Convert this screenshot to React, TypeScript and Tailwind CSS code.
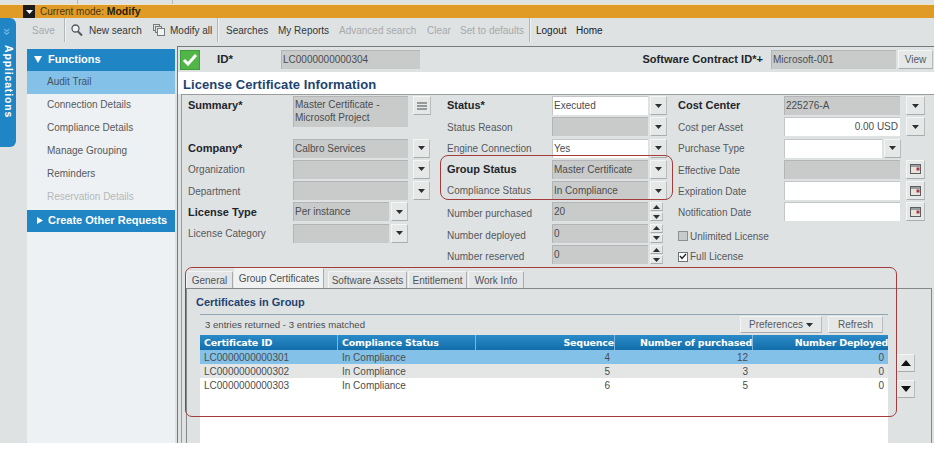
import React from "react";

const Down = ({ className = "" }: { className?: string }) => (
  <svg width="7" height="4" viewBox="0 0 7 4" className={className}><path d="M0 0h7L3.5 4z" fill="#2c2f33" /></svg>
);
const Up = () => (
  <svg width="7" height="4" viewBox="0 0 7 4"><path d="M0 4h7L3.5 0z" fill="#2c2f33" /></svg>
);

const Btn = ({ children, className = "" }: { children?: React.ReactNode; className?: string }) => (
  <div className={"flex items-center justify-center bg-[#e6e8e8] border border-[#f4f5f5] border-r-[#b9bcbd] border-b-[#a9acad] shrink-0 " + className}>{children}</div>
);

const Field = ({ value, white, w, right, tall }: { value?: string; white?: boolean; w: string; right?: boolean; tall?: boolean }) => (
  <div className={`${w} ${tall ? "h-[31px] leading-[13px] pt-[1px]" : "h-[19px] leading-[17px]"} ${white ? "bg-white border-[#c4c7c8]" : "bg-[#c9caca] border-[#b2b4b5]"} ${right ? "text-right pr-[2px]" : ""} border-l border-t px-[1px] text-[10px] text-[#4a4d50] overflow-hidden shrink-0`}>{value}</div>
);

const Label = ({ text, bold, w = "w-[105px]", className = "" }: { text: string; bold?: boolean; w?: string; className?: string }) => (
  <div className={`${w} shrink-0 ${bold ? "font-bold text-[#22262b] text-[11px]" : "text-[#55595d] text-[10px]"} leading-[19px] ${className}`}>{text}</div>
);

const Calendar = () => (
  <svg width="11" height="10" viewBox="0 0 11 10">
    <rect x="0.5" y="0.5" width="10" height="9" fill="#e9e3dc" stroke="#5c5f62" />
    <rect x="1" y="1" width="9" height="2" fill="#9a9da0" />
    <rect x="6.5" y="3.5" width="3" height="3" fill="#a83a48" />
  </svg>
);

const Row = ({ label, bold, value, white, fw = "w-[96px]", btn = true, lcls = "" }: { label: string; bold?: boolean; value?: string; white?: boolean; fw?: string; btn?: boolean; lcls?: string }) => (
  <div className="flex items-start">
    <Label text={label} bold={bold} className={lcls} />
    <Field value={value} white={white} w={fw} />
    {btn && <Btn className="w-[17px] h-[19px] ml-[2px]"><Down /></Btn>}
  </div>
);

const NumRow = ({ label, value }: { label: string; value: string }) => (
  <div className="flex items-start">
    <Label text={label} className="pt-[2px]" />
    <Field value={value} w="w-[96px]" />
    <div className="flex flex-col ml-[2px] gap-[1px]">
      <Btn className="w-[13px] h-[9px]"><Up /></Btn>
      <Btn className="w-[13px] h-[9px]"><Down /></Btn>
    </div>
  </div>
);

const DateRow = ({ label, white }: { label: string; white?: boolean }) => (
  <div className="flex items-start">
    <Label text={label} w="w-[106px]" className="pt-[1px]" />
    <Field white={white} w="w-[116px]" />
    <Btn className="w-[19px] h-[19px] ml-[6px]"><Calendar /></Btn>
  </div>
);

const Tab = ({ text, w, active }: { text: string; w: string; active?: boolean }) => (
  <div className={`${w} ${active ? "h-[20px] bg-[#f0f2f2] text-[#4a4e52] leading-[19px]" : "h-[17px] bg-[#e3e5e6] text-[#505458] leading-[18px]"} border border-b-0 border-[#f3f4f5] border-r-[#a9acae] text-center text-[10px] rounded-t-[2px] shrink-0`}>{text}</div>
);

const Cells = ({ a, b, c, d, e, cls }: { a: string; b: string; c: string; d: string; e: string; cls: string }) => (
  <div className={"flex h-[14px] leading-[15px] text-[10px] text-[#4a4d50] " + cls}>
    <div className="w-[138px] pl-[4px]">{a}</div>
    <div className="w-[138px] pl-[4px]">{b}</div>
    <div className="w-[138px] text-right pr-[4px]">{c}</div>
    <div className="w-[138px] text-right pr-[4px]">{d}</div>
    <div className="w-[136px] text-right pr-[4px]">{e}</div>
  </div>
);

const Sep = ({ ml }: { ml: string }) => <div className={`${ml} w-[2px] h-[24px] self-start bg-[#b4b7b8] border-r border-[#f0f1f1] shrink-0`} />;

const Item = ({ text, active, off }: { text: string; active?: boolean; off?: boolean }) => (
  <div className={`h-[23px] leading-[22px] pl-[20px] text-[10px] ${active ? "bg-[#84c1e8] text-[#46525a]" : off ? "text-[#b5b8ba]" : "text-[#55595d]"}`}>{text}</div>
);

export default function App() {
  return (
    <div className="relative w-[934px] h-[449px] bg-white overflow-hidden font-['Liberation_Sans',Arial,sans-serif]">
      <div className="h-[443px] flex flex-col bg-[#dfe2e3] overflow-hidden">
        <div className="h-[5px] shrink-0 flex border-b border-[#efe3c8]">
          <div className="ml-[77px] w-[1px] bg-[#b4b7b8]" />
          <div className="ml-[94px] w-[1px] bg-[#b4b7b8]" />
        </div>
        <div className="h-[13px] shrink-0 bg-[#df9b25] flex items-center">
          <div className="ml-[23px] w-[12px] h-[13px] bg-[#1b1b1b] flex items-center justify-center">
            <svg width="7" height="4" viewBox="0 0 7 4"><path d="M0 0h7L3.5 4z" fill="#fff" /></svg>
          </div>
          <div className="ml-[5px] text-[10px] leading-[15px] text-[#4a3712]">Current mode: <span className="font-bold text-[#2a1e08] text-[10.5px]">Modify</span></div>
        </div>
        <div className="h-[28px] shrink-0 flex items-center pb-[4px] text-[10px] text-[#33373b] whitespace-nowrap">
          <div className="ml-[32px] text-[#a6a9ab] w-[23px]">Save</div>
          <Sep ml="ml-[9px]" />
          <svg className="ml-[5px] shrink-0" width="12" height="13" viewBox="0 0 12 13" fill="none">
            <circle cx="4.5" cy="4.5" r="3.5" stroke="#55595c" strokeWidth="1.3" fill="#eef2f4" />
            <path d="M7 7.5l4 4" stroke="#55595c" strokeWidth="2" />
          </svg>
          <div className="ml-[6px] w-[52px] shrink-0">New search</div>
          <svg className="ml-[12px] shrink-0" width="12" height="12" viewBox="0 0 12 12" fill="none" stroke="#777b7e">
            <rect x="0.5" y="0.5" width="6" height="6" fill="#dfe2e3" />
            <rect x="2.5" y="2.5" width="6" height="6" fill="#dfe2e3" />
            <rect x="4.5" y="4.5" width="7" height="7" fill="#f2f3f3" />
          </svg>
          <div className="ml-[5px] w-[41px] shrink-0">Modify all</div>
          <Sep ml="ml-[6px]" />
          <div className="ml-[7px] w-[42px] shrink-0">Searches</div>
          <div className="ml-[10px] w-[50px] shrink-0">My Reports</div>
          <div className="ml-[11px] w-[78px] shrink-0 text-[#a6a9ab]">Advanced search</div>
          <div className="ml-[10px] w-[22px] shrink-0 text-[#a6a9ab]">Clear</div>
          <div className="ml-[11px] w-[62px] shrink-0 text-[#a6a9ab]">Set to defaults</div>
          <Sep ml="ml-[7px]" />
          <div className="ml-[5px] w-[31px] shrink-0 text-[#1d2024]">Logout</div>
          <div className="ml-[9px] text-[#1d2024]">Home</div>
        </div>
        <div className="flex-1 flex min-h-0">
          <div className="w-[27px] shrink-0" />
          <div className="w-[148px] mt-[3px] bg-[#eef1f3] shrink-0">
            <div className="h-[22px] bg-[#1f85c4] flex items-center pb-[2px] text-white font-bold text-[11px]">
              <svg className="ml-[7px]" width="8" height="7" viewBox="0 0 8 7"><path d="M0 0h8L4 7z" fill="#fff" /></svg>
              <span className="ml-[6px]">Functions</span>
            </div>
            <Item text="Audit Trail" active />
            <Item text="Connection Details" />
            <Item text="Compliance Details" />
            <Item text="Manage Grouping" />
            <Item text="Reminders" />
            <Item text="Reservation Details" off />
            <div className="h-[22px] mt-[1px] bg-[#1f85c4] flex items-center pb-[2px] text-white font-bold text-[11px]">
              <svg className="ml-[10px]" width="6" height="7" viewBox="0 0 6 7"><path d="M0 0v7l6-3.5z" fill="#fff" /></svg>
              <span className="ml-[5px]">Create Other Requests</span>
            </div>
          </div>
          <div className="flex-1 ml-[2px] flex flex-col border-l border-t border-[#77797a] min-w-0">
            <div className="h-[25px] shrink-0 flex items-center">
              <div className="ml-[2px] w-[20px] h-[20px] bg-[#52b548] border border-[#3c9c35] flex items-center justify-center shrink-0">
                <svg width="16" height="13" viewBox="0 0 16 13" fill="none"><path d="M2 7l4 4 8-9" stroke="#fff" strokeWidth="3" /></svg>
              </div>
              <div className="ml-[17px] w-[64px] font-bold text-[11.5px] text-[#22262b] shrink-0">ID*</div>
              <Field value="LC0000000000304" w="w-[139px]" />
              <div className="ml-auto font-bold text-[11px] tracking-[0.05px] text-[#22262b]">Software Contract ID*+</div>
              <div className="ml-[8px]"><Field value="Microsoft-001" w="w-[125px]" /></div>
              <Btn className="ml-[2px] mr-[1px] w-[35px] h-[19px] text-[10px] text-[#55595d]">View</Btn>
            </div>
            <div className="h-[22px] shrink-0 bg-white pl-[5px] pt-[4px] flex items-center font-bold text-[13px] tracking-[0.08px] text-[#1d4371]">License Certificate Information</div>
            <div className="flex-1 ml-[3px] border-l border-t border-[#9a9d9e] flex flex-col min-h-0">
              <div className="mt-[1px] pl-[6px] grid grid-flow-col grid-cols-[259px_231px_250px] grid-rows-[repeat(8,21.3px)] shrink-0">
                <div className="row-span-2 flex items-start">
                  <Label text="Summary*" bold />
                  <Field value={"Master Certificate - Microsoft Project"} w="w-[115px]" tall />
                  <Btn className="w-[18px] h-[19px] ml-[5px]">
                    <svg width="10" height="8" viewBox="0 0 10 8" fill="none" stroke="#44484b"><path d="M0 1h10M0 4h10M0 7h10" /></svg>
                  </Btn>
                </div>
                <Row label="Company*" bold value="Calbro Services" fw="w-[115px] mr-[3px]" />
                <Row label="Organization" fw="w-[115px] mr-[3px]" />
                <Row label="Department" fw="w-[115px] mr-[3px]" lcls="pt-[1px]" />
                <Row label="License Type" bold value="Per instance" fw="w-[96px]" lcls="pt-[1px]" />
                <Row label="License Category" fw="w-[96px]" />
                <div />

                <Row label="Status*" bold value="Executed" white />
                <Row label="Status Reason" lcls="pt-[1px]" />
                <Row label="Engine Connection" value="Yes" white />
                <Row label="Group Status" bold value="Master Certificate" />
                <Row label="Compliance Status" value="In Compliance" />
                <NumRow label="Number purchased" value="20" />
                <NumRow label="Number deployed" value="0" />
                <NumRow label="Number reserved" value="0" />

                <div className="flex items-start">
                  <Label text="Cost Center" bold w="w-[106px]" />
                  <Field value="225276-A" w="w-[116px]" />
                  <Btn className="w-[19px] h-[19px] ml-[6px]"><Down /></Btn>
                </div>
                <div className="flex items-start">
                  <Label text="Cost per Asset" w="w-[106px]" className="pt-[1px]" />
                  <Field value="0.00 USD" white right w="w-[116px]" />
                  <Btn className="w-[19px] h-[19px] ml-[6px]"><Down /></Btn>
                </div>
                <div className="flex items-start">
                  <Label text="Purchase Type" w="w-[106px]" />
                  <Field white w="w-[98px]" />
                  <Btn className="w-[17px] h-[19px] ml-[2px]"><Down /></Btn>
                </div>
                <DateRow label="Effective Date" />
                <DateRow label="Expiration Date" white />
                <DateRow label="Notification Date" white />
                <div className="flex items-center h-[19px] mt-[3px] text-[10px] text-[#55595d]">
                  <div className="w-[10px] h-[10px] bg-[#c9caca] border border-[#8d9092] mr-[2px]" />
                  Unlimited License
                </div>
                <div className="flex items-center h-[19px] mt-[2px] text-[10px] text-[#55595d]">
                  <div className="w-[10px] h-[10px] bg-white border border-[#6f7275] mr-[2px] flex items-center justify-center">
                    <svg width="8" height="7" viewBox="0 0 8 7" fill="none"><path d="M1 3l2 2.5L7 1" stroke="#222" strokeWidth="1.3" /></svg>
                  </div>
                  Full License
                </div>
              </div>
              <div className="ml-[4px] mr-[2px] mt-[1.6px] flex flex-col flex-1 min-h-0">
                <div className="h-[20px] flex items-end gap-[1px] shrink-0">
                  <Tab text="General" w="w-[47px]" />
                  <Tab text="Group Certificates" w="w-[90px]" active />
                  <div className="w-[2px]" />
                  <Tab text="Software Assets" w="w-[79px]" />
                  <Tab text="Entitlement" w="w-[59px]" />
                  <Tab text="Work Info" w="w-[56px]" />
                </div>
                <div className="flex-1 border-l border-t border-r border-[#85888a] pl-[13px] min-h-0">
                  <div className="h-[25px] flex items-end pb-[3px] -ml-[4px] font-bold text-[11px] text-[#1d4371]">Certificates in Group</div>
                  <div className="flex items-start">
                    <div className="w-[688px] h-[132px] bg-white border-t border-[#8fa6b4] shrink-0">
                      <div className="h-[20px] bg-[#dfe2e3] flex items-center text-[9.6px] text-[#4a4d50] pl-[5px]">
                        3 entries returned - 3 entries matched
                        <Btn className="ml-auto w-[82px] h-[17px] text-[10px] text-[#55595d] gap-[3px]">Preferences <Down /></Btn>
                        <Btn className="ml-[6px] mr-[5px] w-[55px] h-[17px] text-[10px] text-[#55595d]">Refresh</Btn>
                      </div>
                      <div className="h-[15px] flex bg-gradient-to-b from-[#2a8bc8] to-[#126eab] text-white font-bold text-[9.5px] leading-[15px] font-['DejaVu_Sans',sans-serif] tracking-[-0.2px]">
                        <div className="w-[138px] pl-[4px] border-r border-[#7fb5d8]">Certificate ID</div>
                        <div className="w-[138px] pl-[4px] border-r border-[#7fb5d8]">Compliance Status</div>
                        <div className="w-[139px] text-right border-r border-[#7fb5d8]">Sequence</div>
                        <div className="w-[138px] text-right border-r border-[#7fb5d8]">Number of purchased</div>
                        <div className="w-[135px] text-right">Number Deployed</div>
                      </div>
                      <Cells a="LC0000000000301" b="In Compliance" c="4" d="12" e="0" cls="bg-[#84c1e8]" />
                      <Cells a="LC0000000000302" b="In Compliance" c="5" d="3" e="0" cls="bg-[#e4e6e6]" />
                      <Cells a="LC0000000000303" b="In Compliance" c="6" d="5" e="0" cls="bg-white" />
                    </div>
                    <div className="ml-[9px] mt-[40px] flex flex-col gap-[8px]">
                      <Btn className="w-[18px] h-[18px]">
                        <svg width="10" height="6" viewBox="0 0 10 6"><path d="M0 6h10L5 0z" fill="#111" /></svg>
                      </Btn>
                      <Btn className="w-[18px] h-[18px]">
                        <svg width="10" height="6" viewBox="0 0 10 6"><path d="M0 0h10L5 6z" fill="#111" /></svg>
                      </Btn>
                    </div>
                  </div>
                </div>
              </div>
            </div>
          </div>
        </div>
      </div>

      <div className="absolute left-0 top-[18px] w-[16px] h-[129px] bg-[#1f85c4] rounded-r-[6px] text-white flex flex-col items-center">
        <div className="mt-[7px] text-[13px] leading-[13px] text-[#8cc3e6] rotate-90">»</div>
        <div className="mt-[7px] font-bold text-[10.5px] tracking-[0.85px] [writing-mode:vertical-rl]">Applications</div>
      </div>

      <div className="absolute left-[440px] top-[155px] w-[233px] h-[45px] border border-[#a43c3c] rounded-[8px] pointer-events-none" />
      <div className="absolute left-[185px] top-[267px] w-[712px] h-[150px] border border-[#a43c3c] rounded-[7px] pointer-events-none" />
    </div>
  );
}
